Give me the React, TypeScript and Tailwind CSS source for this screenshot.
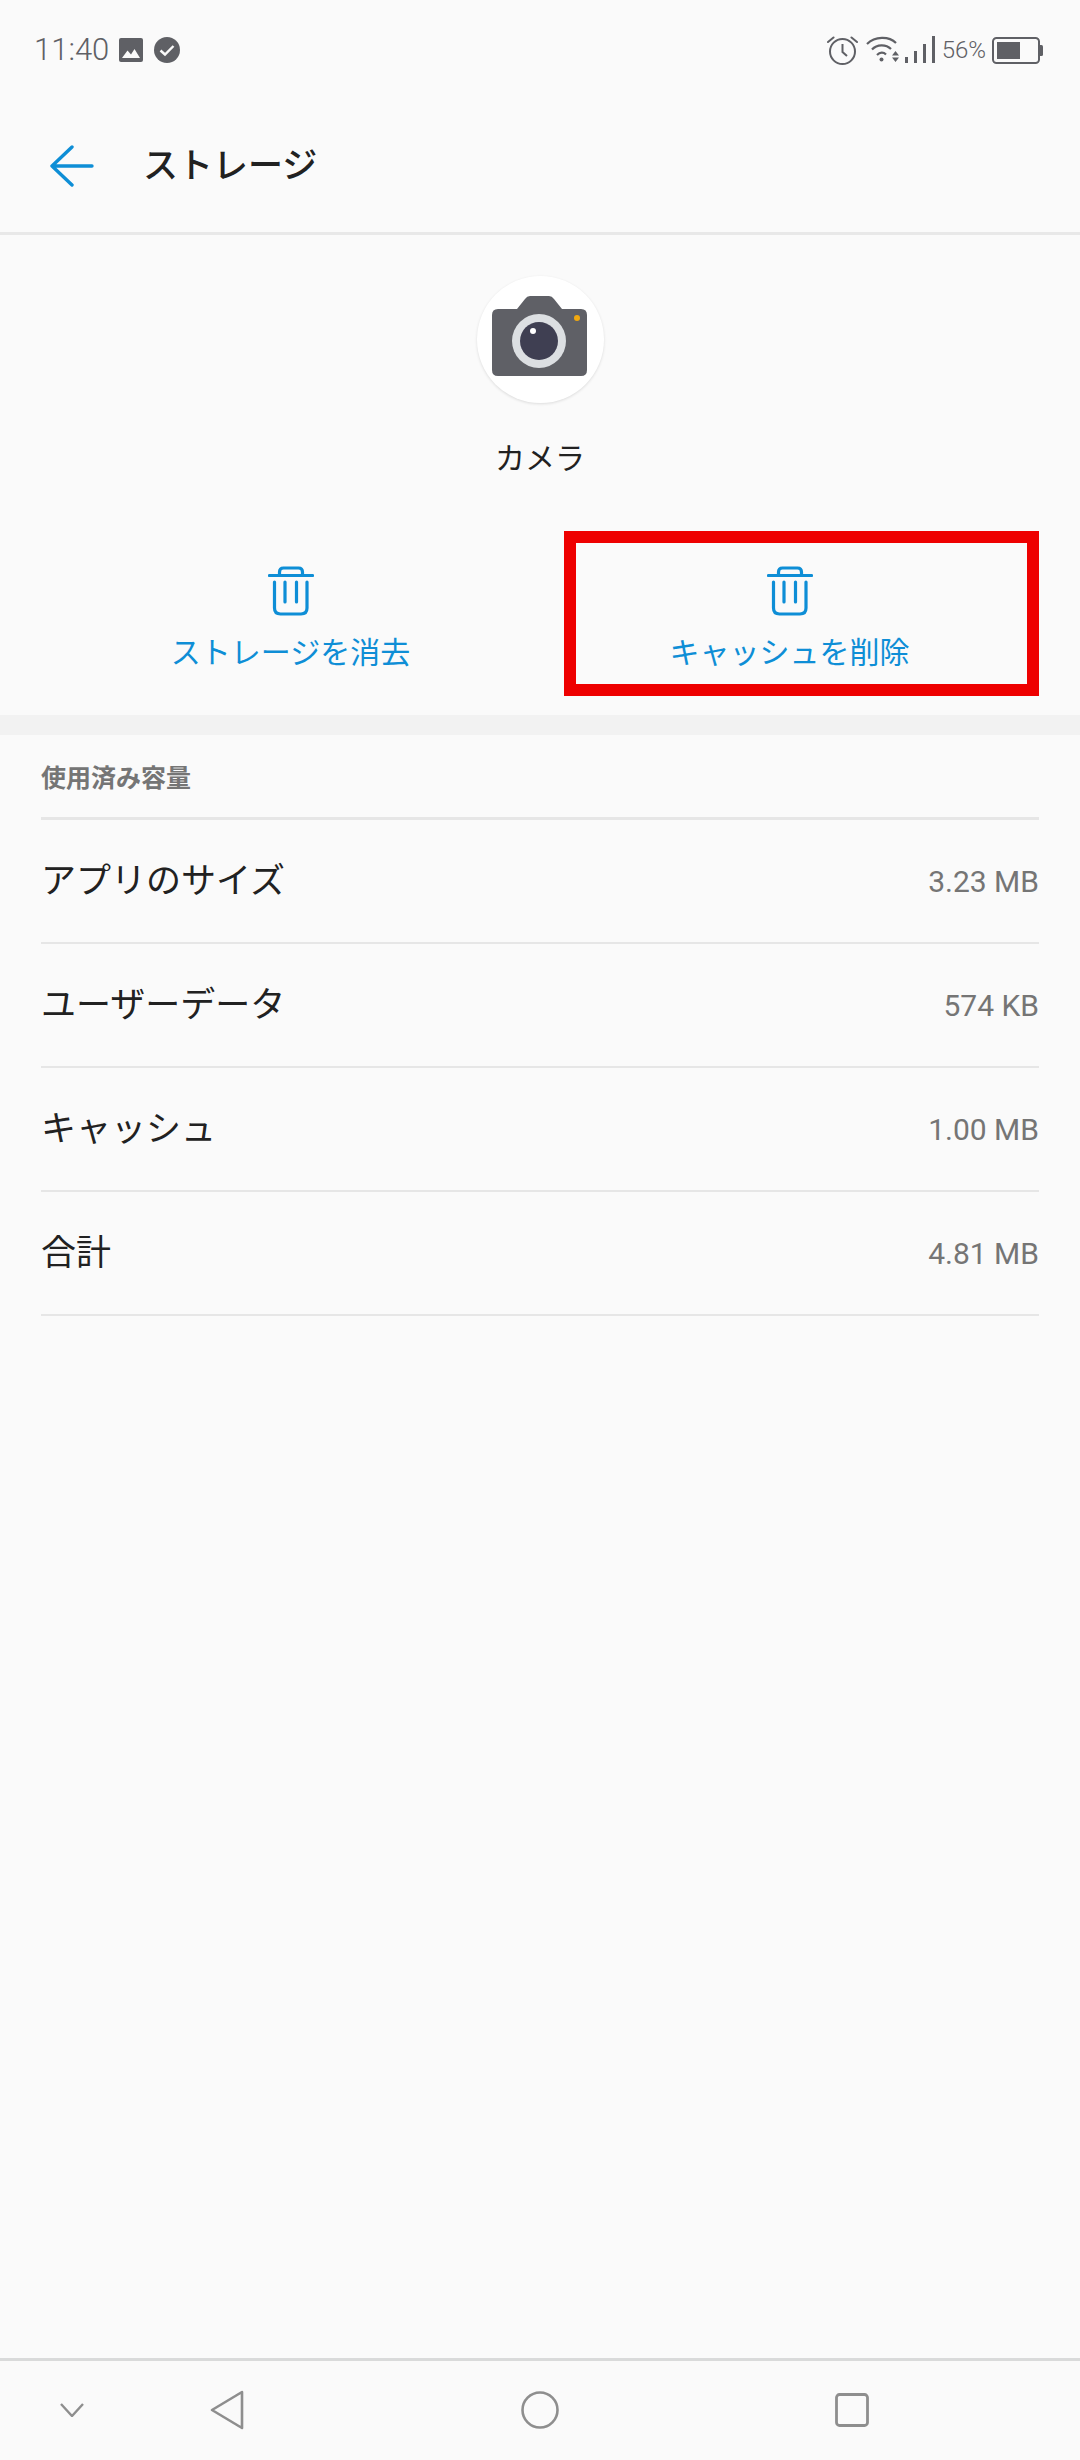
import React from 'react';

const FONT = 'font-["Roboto","Noto_Sans_CJK_JP",sans-serif]';

const storageRows = [
  { label: 'アプリのサイズ', value: '3.23 MB' },
  { label: 'ユーザーデータ', value: '574 KB' },
  { label: 'キャッシュ', value: '1.00 MB' },
  { label: '合計', value: '4.81 MB' },
];

// ステータスバーのアイコン
const ImageIcon = () => (
  <svg width="24" height="24" viewBox="0 0 24 24">
    <rect width="24" height="24" rx="2" fill="#5f6065" />
    <path d="M3 20 L8.5 12.5 L12 16.5 L15.5 11 L21 20 Z" fill="#fafafa" />
  </svg>
);

const CheckCircleIcon = () => (
  <svg width="26" height="26" viewBox="0 0 26 26">
    <circle cx="13" cy="13" r="13" fill="#5f6065" />
    <path d="M6.5 13.5 L11 17.5 L19.5 9" fill="none" stroke="#fafafa" strokeWidth="2.4" />
  </svg>
);

const AlarmIcon = () => (
  <svg width="31" height="29" viewBox="0 0 31 29" fill="none" stroke="#5f6065" strokeWidth="2">
    <circle cx="15.5" cy="15.5" r="12.5" />
    <path d="M15.5 8 V16 L20 20" />
    <path d="M1 6 L6.5 1.5 M30 6 L24.5 1.5" strokeLinecap="round" />
  </svg>
);

const WifiIcon = () => (
  <svg width="34" height="28" viewBox="0 0 34 28" fill="none" stroke="#5f6065" strokeWidth="2.2">
    <path d="M1 8 C9 0 23 0 30 7" />
    <path d="M6 13.5 C11 8 20 8 25 13" />
    <path d="M11 19 C14 16 17.5 16 20 18.5" />
    <circle cx="15.5" cy="23.5" r="2" fill="#5f6065" stroke="none" />
    <path d="M29.5 15 L33 19.5 H26 Z M26 21.5 H33 L29.5 26 Z" fill="#5f6065" stroke="none" />
  </svg>
);

const SignalIcon = () => (
  <svg width="30" height="28" viewBox="0 0 30 28" fill="#5f6065">
    <rect x="0" y="21" width="3" height="6" />
    <rect x="9" y="15" width="3" height="12" />
    <rect x="18" y="8" width="3" height="19" />
    <rect x="27" y="0" width="3" height="27" />
  </svg>
);

const BatteryIcon = () => (
  <svg width="51" height="27" viewBox="0 0 51 27">
    <rect x="1" y="1" width="46" height="25" rx="3.5" fill="none" stroke="#5f6065" strokeWidth="2" />
    <rect x="5" y="5" width="23" height="17" fill="#5f6065" />
    <path d="M48 8 H49.5 Q51 8 51 9.5 V17.5 Q51 19 49.5 19 H48 Z" fill="#5f6065" />
  </svg>
);

const BackArrow = () => (
  <svg width="44" height="42" viewBox="0 0 44 42" fill="none" stroke="#0e8ed6" strokeWidth="3.4" strokeLinecap="round" strokeLinejoin="round">
    <path d="M42 21 H2 M22 2 L2 21 L22 40" />
  </svg>
);

const CameraIcon = () => (
  <svg width="95" height="80" viewBox="0 0 95 80">
    <path d="M6 13 H25 L33 3 Q35 0 38 0 H57 Q60 0 62 3 L70 13 H89 Q95 13 95 19 V74 Q95 80 89 80 H6 Q0 80 0 74 V19 Q0 13 6 13 Z" fill="#5f6066" />
    <circle cx="47" cy="45" r="27" fill="#dcdfe2" />
    <circle cx="47" cy="45" r="19" fill="#3f3f52" />
    <circle cx="41" cy="35" r="3" fill="#fff" />
    <circle cx="85" cy="22" r="3" fill="#f1a80f" />
  </svg>
);

const TrashIcon = () => (
  <svg width="46" height="50" viewBox="0 0 46 50" fill="none" stroke="#0e8ed6" strokeWidth="3.2" strokeLinecap="round">
    <path d="M1.5 9.500 H44.500" />
    <path d="M11.500 8 V6 Q11.500 2 15.500 2 H30.500 Q34.500 2 34.500 6 V8" strokeLinecap="butt" />
    <path d="M6.500 16 V42 Q6.500 48 12.500 48 H33 Q39 48 39 42 V16" />
    <path d="M17 16 V36 M28.500 16 V36" />
  </svg>
);

const NavBar = () => (
  <div className="mt-auto flex h-[102px] items-center border-t-[3px] border-[#d9dada] pb-[2px]">
    <svg className="ml-[60px]" width="24" height="14" viewBox="0 0 24 14" fill="none" stroke="#8e8e8e" strokeWidth="2.4">
      <path d="M1 1 L12 13 L23 1" />
    </svg>
    <svg className="ml-[126px]" width="34" height="40" viewBox="0 0 34 40" fill="none" stroke="#8e8e8e" strokeWidth="2.6" strokeLinejoin="round">
      <path d="M32 2 L2 20 L32 38 Z" />
    </svg>
    <svg className="ml-[277px]" width="38" height="38" viewBox="0 0 38 38" fill="none" stroke="#8e8e8e" strokeWidth="2.6">
      <circle cx="19" cy="19" r="17.500" />
    </svg>
    <svg className="ml-[276px]" width="34" height="34" viewBox="0 0 34 34" fill="none" stroke="#8e8e8e" strokeWidth="2.8">
      <rect x="1.500" y="1.500" width="31" height="31" rx="3" />
    </svg>
  </div>
);

const App: React.FC = () => {
  return (
    <div className={`${FONT} flex h-[2460px] w-[1080px] flex-col overflow-hidden bg-[#fafafa] text-[#212121]`}>
      {/* ステータスバー */}
      <div className="flex h-[100px] items-center pr-[37px] pl-[34px] text-[#5f6065]">
        <span className="mr-[10px] text-[31px] font-light">11:40</span>
        <div className="mr-[11px]"><ImageIcon /></div>
        <CheckCircleIcon />
        <div className="ml-auto flex items-center">
          <AlarmIcon />
          <div className="ml-[8px]"><WifiIcon /></div>
          <div className="ml-[5px]"><SignalIcon /></div>
          <span className="mr-[6px] ml-[7px] text-[24px] font-light">56%</span>
          <BatteryIcon />
        </div>
      </div>

      {/* ヘッダー */}
      <div className="flex h-[135px] items-center gap-[49px] border-b-[3px] border-[#e8e8e8] pl-[50px]">
        <BackArrow />
        <span className="text-[35px] leading-none font-medium">ストレージ</span>
      </div>

      {/* アプリ情報 */}
      <div className="flex flex-col items-center pt-[41px]">
        <div className="flex h-[127px] w-[127px] items-center justify-center rounded-full bg-white pr-[1px] pb-[7px] shadow-[0_1px_3px_rgba(0,0,0,0.12)]">
          <CameraIcon />
        </div>
        <div className="mt-[38px] text-[30px] leading-[36px]">カメラ</div>
      </div>

      {/* 操作ボタン */}
      <div className="mt-[54px] grid grid-cols-2 px-[41px]">
        {['ストレージを消去', 'キャッシュを削除'].map((label, i) => (
          <div key={label} className="relative flex h-[165px] flex-col items-center pt-[35px]">
            <TrashIcon />
            <span className="mt-[19px] text-[30px] leading-[36px] text-[#0e8ed6]">{label}</span>
            {i === 1 && (
              <div className="absolute top-0 right-0 bottom-0 left-[24px] border-[12px] border-[#ee0000]" />
            )}
          </div>
        ))}
      </div>

      <div className="mt-[19px] h-[20px] bg-[#f2f2f2]" />

      {/* 使用済み容量 */}
      <div className="px-[41px]">
        <div className="flex h-[85px] items-center border-b-[3px] border-[#e6e6e6] pt-[5px] text-[25px] font-bold text-[#757575]">
          使用済み容量
        </div>
        {storageRows.map((row) => (
          <div key={row.label} className="flex h-[124px] items-center justify-between border-b-[2px] border-[#e6e6e6]">
            <span className="pt-[2px] text-[35px]">{row.label}</span>
            <span className="text-[30px] text-[#757575]">{row.value}</span>
          </div>
        ))}
      </div>

      <NavBar />
    </div>
  );
};

export default App;
